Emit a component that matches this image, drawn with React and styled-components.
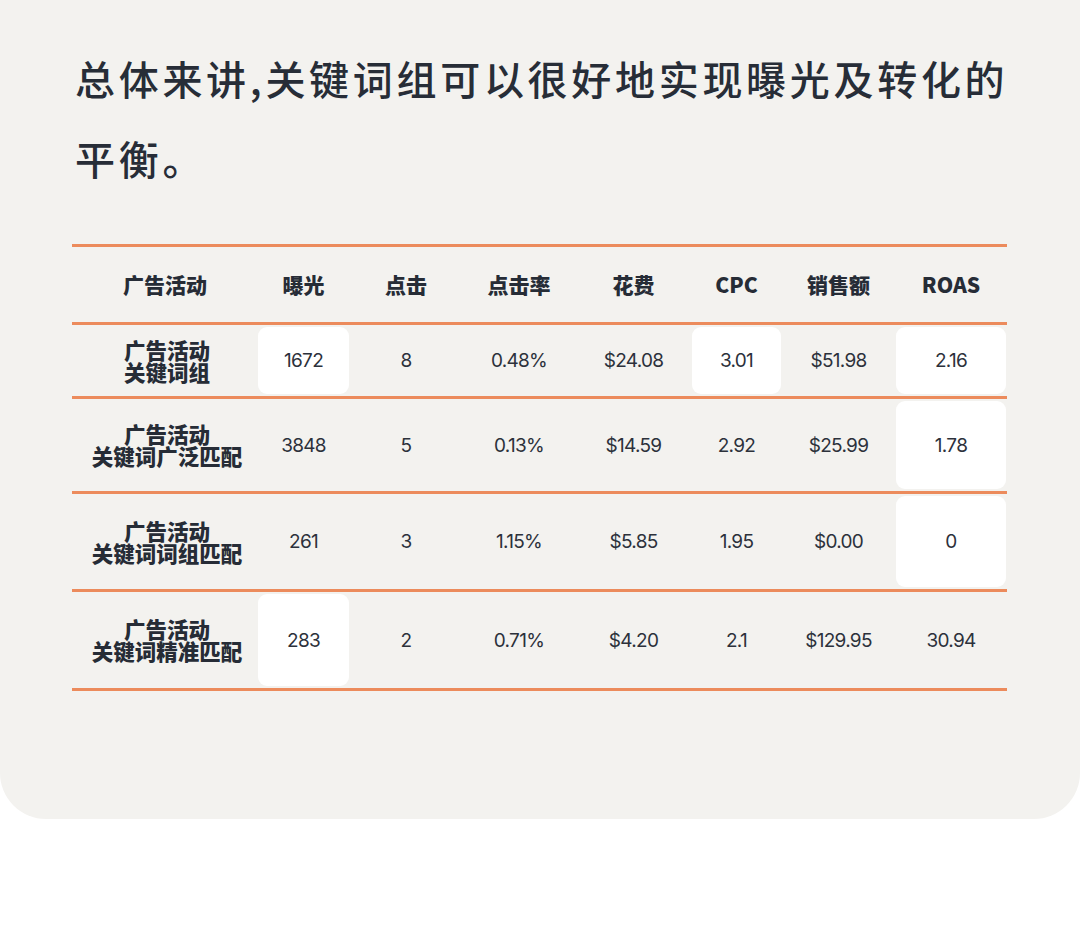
import React from 'react';
import styled, { createGlobalStyle } from 'styled-components';

const GlobalStyle = createGlobalStyle`
  body {
    margin: 0;
    background: #ffffff;
    font-family: "Noto Sans CJK SC", "Noto Sans", sans-serif;
  }
`

const columns = ['广告活动', '曝光', '点击', '点击率', '花费', 'CPC', '销售额', 'ROAS']

const rows = [
  { label: ['广告活动', '关键词组'], height: 71, cells: ['1672', '8', '0.48%', '$24.08', '3.01', '$51.98', '2.16'], white: [0, 4, 6] },
  { label: ['广告活动', '关键词广泛匹配'], height: 92, cells: ['3848', '5', '0.13%', '$14.59', '2.92', '$25.99', '1.78'], white: [6] },
  { label: ['广告活动', '关键词词组匹配'], height: 95, cells: ['261', '3', '1.15%', '$5.85', '1.95', '$0.00', '0'], white: [6] },
  { label: ['广告活动', '关键词精准匹配'], height: 96, cells: ['283', '2', '0.71%', '$4.20', '2.1', '$129.95', '30.94'], white: [0] },
]

const App = () => {
  return (
    <>
      <GlobalStyle />
      <Card>
        <Heading>总体来讲,关键词组可以很好地实现曝光及转化的平衡。</Heading>
        <Table>
          <Row height={75}>
            {columns.map((c) => (
              <HeadCell key={c}>{c}</HeadCell>
            ))}
          </Row>
          {rows.map((r, i) => (
            <Row key={i} height={r.height}>
              <LabelCell>
                <span>{r.label[0]}</span>
                <span>{r.label[1]}</span>
              </LabelCell>
              {r.cells.map((v, j) => (
                <DataCell key={j} $white={r.white.includes(j)}>{v}</DataCell>
              ))}
            </Row>
          ))}
        </Table>
      </Card>
    </>
  )
}

const Card = styled.div`
  background: #f3f2ef;
  border-radius: 0 0 46px 46px;
  padding: 38px 73px 130px 72px;
  height: 819px;
  box-sizing: border-box;
`

const Heading = styled.h1`
  margin: 0 0 46px 3px;
  width: 950px;
  font-size: 40px;
  line-height: 80px;
  letter-spacing: 3.7px;
  font-weight: 500;
  color: #272d37;
`

const Table = styled.div`
  width: 935px;
  border-top: 3px solid #ec8b5c;
`

const Row = styled.div`
  display: grid;
  grid-template-columns: 186px 91px 114px 112px 117px 89px 115px 110px;
  height: ${(p) => p.height}px;
  border-bottom: 3px solid #ec8b5c;
`

const HeadCell = styled.div`
  display: flex;
  align-items: center;
  justify-content: center;
  font-family: "Noto Sans CJK SC", sans-serif;
  font-weight: 900;
  font-size: 21px;
  color: #262c36;
  padding-bottom: 2px;
`

const LabelCell = styled.div`
  display: flex;
  flex-direction: column;
  align-items: center;
  justify-content: center;
  text-align: center;
  font-family: "Noto Sans CJK SC", sans-serif;
  font-weight: 900;
  font-size: 21.5px;
  line-height: 22px;
  color: #262c36;
  padding-left: 4px;
  white-space: nowrap;
`

const DataCell = styled.div`
  display: flex;
  align-items: center;
  justify-content: center;
  margin: 2px 0;
  border-radius: 9px;
  background: ${(p) => (p.$white ? '#ffffff' : 'transparent')};
  font-family: Inter, "Noto Sans", sans-serif;
  font-size: 19px;
  letter-spacing: -0.7px;
  color: #2c313b;
`

export default App
